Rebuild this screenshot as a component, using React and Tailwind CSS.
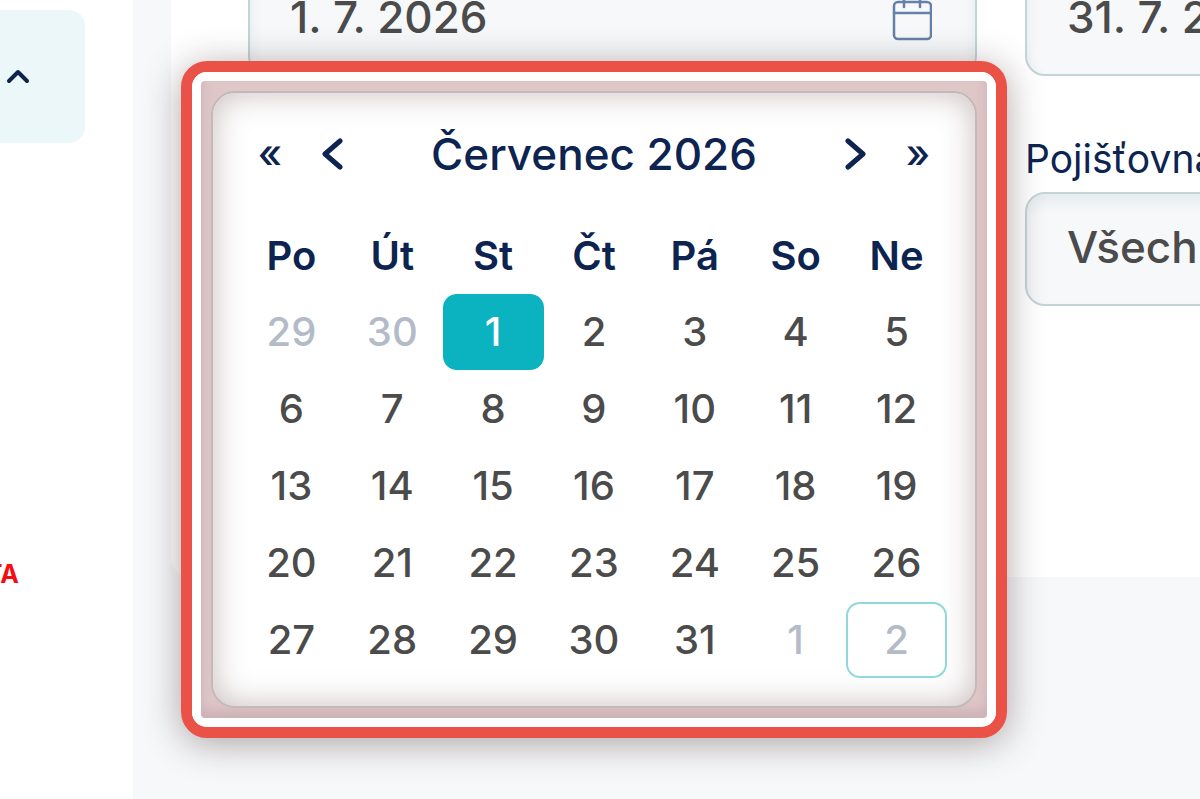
import React, { useState } from 'react';
import clsx from 'clsx';

const weekDays = ['Po', 'Út', 'St', 'Čt', 'Pá', 'So', 'Ne'];

const weeks = [
    [29, 30, 1, 2, 3, 4, 5],
    [6, 7, 8, 9, 10, 11, 12],
    [13, 14, 15, 16, 17, 18, 19],
    [20, 21, 22, 23, 24, 25, 26],
    [27, 28, 29, 30, 31, 1, 2],
];

const fieldClass = 'block w-full h-[114px] px-10 pb-1 rounded-[20px] border-2 border-[#c3d3d6] bg-[#f6f8fa] text-[44px] font-medium text-[#4b4b4b] shadow-[inset_0_8px_14px_rgba(30,50,60,0.07)] outline-none appearance-none';

function CalendarIcon() {
    return (
        <svg width="40" height="46" viewBox="0 0 40 46" fill="none" stroke="#657fa8" strokeWidth="2.5" strokeLinecap="round" aria-hidden="true">
            <rect x="2" y="7" width="37" height="37" rx="4" />
            <path d="M2 18H39M12 2V12M28 2V12" />
        </svg>
    );
}

function Chevron({ points, width, height, strokeWidth }) {
    return (
        <svg width={width} height={height} viewBox={`0 0 ${width} ${height}`} fill="none" stroke="#0d2350" strokeWidth={strokeWidth} strokeLinecap="round" strokeLinejoin="round" aria-hidden="true">
            <polyline points={points} />
        </svg>
    );
}

function Sidebar() {
    return (
        <aside className="w-[133px] shrink-0 bg-white pt-[10px]">
            <button type="button" aria-label="Sbalit" className="flex items-center w-[85px] h-[133px] pl-[6px] rounded-r-[16px] bg-[#ecf7f9]">
                <Chevron points="3,13 12,4 21,13" width={24} height={17} strokeWidth={4} />
            </button>
            <div className="mt-[415px] flex justify-end w-[19px] overflow-hidden text-[25px] leading-8 font-bold text-[#f40d12]">
                <span>TA</span>
            </div>
        </aside>
    );
}

function NavButton({ label, children }) {
    return (
        <button type="button" aria-label={label} className="flex items-center justify-center w-[58px] h-[60px] text-[40px] font-medium">
            {children}
        </button>
    );
}

function DatePicker({ selected, onSelect }) {
    return (
        <div className="absolute z-10 top-[99px] -left-[67px] w-[826px] rounded-[26px] border-[11px] border-[#ea5147] shadow-[0_5px_36px_rgba(70,45,45,0.42)]">
            <div className="rounded-[15px] border-[9px] border-white">
                <div className="rounded-[4px] bg-[#dfc6c7] p-[10px] shadow-[inset_0_-8px_12px_rgba(150,120,130,0.25)]">
                    <div className="rounded-[24px] border-2 border-[#c2b9b8] bg-white px-7 pb-7 text-[#0d2350] shadow-[inset_0_0_32px_rgba(110,80,75,0.38)]">
                        <div className="flex items-center h-[125px] gap-1 pb-1">
                            <NavButton label="Předchozí rok">«</NavButton>
                            <NavButton label="Předchozí měsíc">
                                <Chevron points="19,3 4,16 19,29" width={22} height={32} strokeWidth={5} />
                            </NavButton>
                            <h2 className="flex-1 text-center text-[44px] font-medium">Červenec 2026</h2>
                            <NavButton label="Další měsíc">
                                <Chevron points="3,3 18,16 3,29" width={22} height={32} strokeWidth={5} />
                            </NavButton>
                            <NavButton label="Další rok">»</NavButton>
                        </div>
                        <table className="w-full h-[460px] table-fixed border-collapse text-[40px]">
                            <thead>
                                <tr>
                                    {weekDays.map(day => (
                                        <th key={day} scope="col" className="h-[76px] p-0 font-semibold">{day}</th>
                                    ))}
                                </tr>
                            </thead>
                            <tbody>
                                {weeks.map((week, row) => (
                                    <tr key={row}>
                                        {week.map((day, col) => {
                                            const index = row * 7 + col;
                                            const outside = index < 2 || index > 32;
                                            return (
                                                <td key={col} className="p-0">
                                                    <button
                                                        type="button"
                                                        onClick={() => onSelect(index)}
                                                        className={clsx(
                                                            'block w-full h-[76px] rounded-[14px] font-medium',
                                                            index === selected && 'bg-[#0ab3bf] text-white',
                                                            index !== selected && (outside ? 'text-[#b4bbc8]' : 'text-[#4b4b4b]'),
                                                            index === 34 && 'border-2 border-[#8fd9dc]'
                                                        )}
                                                    >{day}</button>
                                                </td>
                                            );
                                        })}
                                    </tr>
                                ))}
                            </tbody>
                        </table>
                    </div>
                </div>
            </div>
        </div>
    );
}

export default function App() {
    const [selected, setSelected] = useState(2);

    return (
        <div className="flex h-screen overflow-hidden bg-[#f6f8fa] font-['Inter','Liberation_Sans',sans-serif]">
            <Sidebar />
            <main className="flex-1 min-w-0 pl-[38px]">
                <div className="flex gap-12 h-[577px] pl-[77px] rounded-bl-[20px] bg-white">
                    <div className="relative w-[729px] shrink-0 -mt-[38px]">
                        <div className="relative">
                            <input type="text" aria-label="Datum od" defaultValue="1. 7. 2026" className={fieldClass} />
                            <span className="absolute right-[45px] top-[33px]"><CalendarIcon /></span>
                        </div>
                        <DatePicker selected={selected} onSelect={setSelected} />
                    </div>
                    <div className="w-[729px] shrink-0 -mt-[38px]">
                        <input type="text" aria-label="Datum do" defaultValue="31. 7. 2026" className={fieldClass} />
                        <label htmlFor="insurer" className="block mt-[60px] h-14 text-[39px] leading-[46px] text-[#0d2350]">Pojišťovna</label>
                        <select id="insurer" className={fieldClass}>
                            <option>Všechny</option>
                        </select>
                    </div>
                </div>
            </main>
        </div>
    );
}
